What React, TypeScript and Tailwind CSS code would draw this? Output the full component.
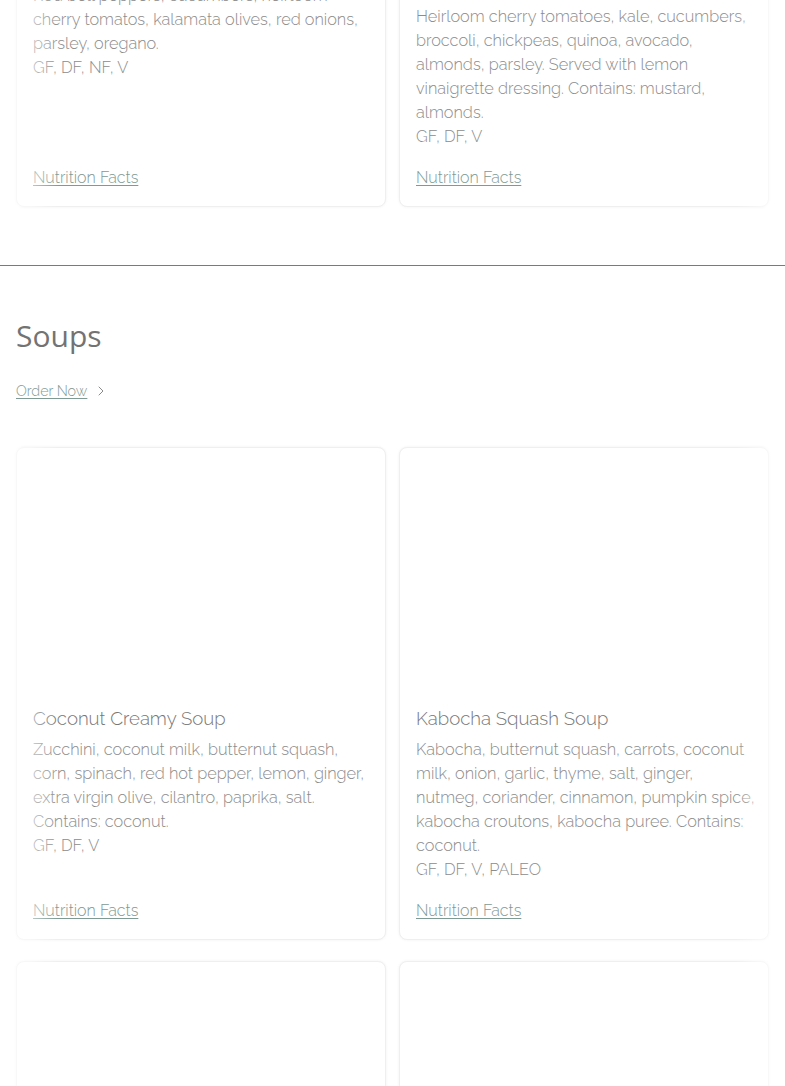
import { ChevronRight } from "lucide-react";

type Item = {
  title: string[];
  lines: string[];
  tags: string;
};

const salads: Item[] = [
  {
    title: ["Greek Salad"],
    lines: [
      "Red bell peppers, cucumbers, heirloom",
      "cherry tomatos, kalamata olives, red onions,",
      "parsley, oregano.",
    ],
    tags: "GF, DF, NF, V",
  },
  {
    title: ["Kale & Quinoa", "Power Salad"],
    lines: [
      "Heirloom cherry tomatoes, kale, cucumbers,",
      "broccoli, chickpeas, quinoa, avocado,",
      "almonds, parsley. Served with lemon",
      "vinaigrette dressing. Contains: mustard,",
      "almonds.",
    ],
    tags: "GF, DF, V",
  },
];

const soups: Item[] = [
  {
    title: ["Coconut Creamy Soup"],
    lines: [
      "Zucchini, coconut milk, butternut squash,",
      "corn, spinach, red hot pepper, lemon, ginger,",
      "extra virgin olive, cilantro, paprika, salt.",
      "Contains: coconut.",
    ],
    tags: "GF, DF, V",
  },
  {
    title: ["Kabocha Squash Soup"],
    lines: [
      "Kabocha, butternut squash, carrots, coconut",
      "milk, onion, garlic, thyme, salt, ginger,",
      "nutmeg, coriander, cinnamon, pumpkin spice,",
      "kabocha croutons, kabocha puree. Contains:",
      "coconut.",
    ],
    tags: "GF, DF, V, PALEO",
  },
  {
    title: ["Lentil Vegetable Soup"],
    lines: [
      "Lentils, carrots, celery, onion, garlic,",
      "tomatoes, spinach, cumin, thyme, salt.",
    ],
    tags: "GF, DF, NF, V",
  },
  {
    title: ["Chicken Tortilla Soup"],
    lines: [
      "Chicken, tomatoes, corn, black beans, onion,",
      "cilantro, lime, chili, garlic, salt.",
    ],
    tags: "GF, DF, NF",
  },
];

function MenuCard({ item }: { item: Item }) {
  return (
    <div className="flex flex-col rounded-lg border border-[#efefef] bg-white shadow-[0_0_3px_rgba(0,0,0,0.06)]">
      {/* photo area (image not loaded) */}
      <div className="h-[244px]" />
      <div className="flex flex-1 flex-col px-4 pt-4 pb-4">
        <h3 className="mb-[9px] text-[18.6px] leading-[21px] text-[#777777]">
          {item.title.map((t) => (
            <span key={t} className="block whitespace-nowrap">
              {t}
            </span>
          ))}
        </h3>
        <p className="text-[16.3px] leading-6 text-[#8c8c8c]">
          {item.lines.map((l) => (
            <span key={l} className="block whitespace-nowrap">
              {l}
            </span>
          ))}
          <span className="block">{item.tags}</span>
        </p>
        <a
          href="#"
          className="mt-auto pt-[17px] text-[16px] leading-6 text-[#7f9a93] underline underline-offset-2"
        >
          Nutrition Facts
        </a>
      </div>
    </div>
  );
}

function EdgeFades() {
  return (
    <>
      <div className="pointer-events-none absolute inset-y-0 left-0 w-[58px] bg-gradient-to-r from-white/70 via-white/50 to-transparent" />
      <div className="pointer-events-none absolute inset-y-0 right-0 w-[50px] bg-gradient-to-l from-white/70 via-white/50 to-transparent" />
    </>
  );
}

export default function App() {
  return (
    <div className="h-[1086px] overflow-hidden bg-white font-['Raleway','Lato',sans-serif] font-light">
      {/* previous section, scrolled partly out of view */}
      <div className="relative -mt-[307px] grid grid-cols-2 gap-[13px] px-4">
        {salads.map((s) => (
          <MenuCard key={s.tags + s.lines[0]} item={s} />
        ))}
        <EdgeFades />
      </div>

      <div className="mt-[58px] border-t border-[#7a7a7a]" />

      {/* Soups */}
      <section className="px-4 pt-[52px]">
        <h2 className="font-['Open_Sans',sans-serif] text-[30px] leading-9 font-normal text-[#737373]">
          Soups
        </h2>
        <a
          href="#"
          className="mt-[27px] flex items-center gap-1.5 text-[14.3px] leading-5 text-[#7f9a93]"
        >
          <span className="underline underline-offset-2">Order Now</span>
          <ChevronRight size={16} strokeWidth={1.5} className="text-[#8a8a8a]" />
        </a>
      </section>

      <div className="relative mt-[46px] grid grid-cols-2 gap-x-[13px] gap-y-[21px] px-4">
        {soups.map((s) => (
          <MenuCard key={s.title[0]} item={s} />
        ))}
        <EdgeFades />
      </div>
    </div>
  );
}
